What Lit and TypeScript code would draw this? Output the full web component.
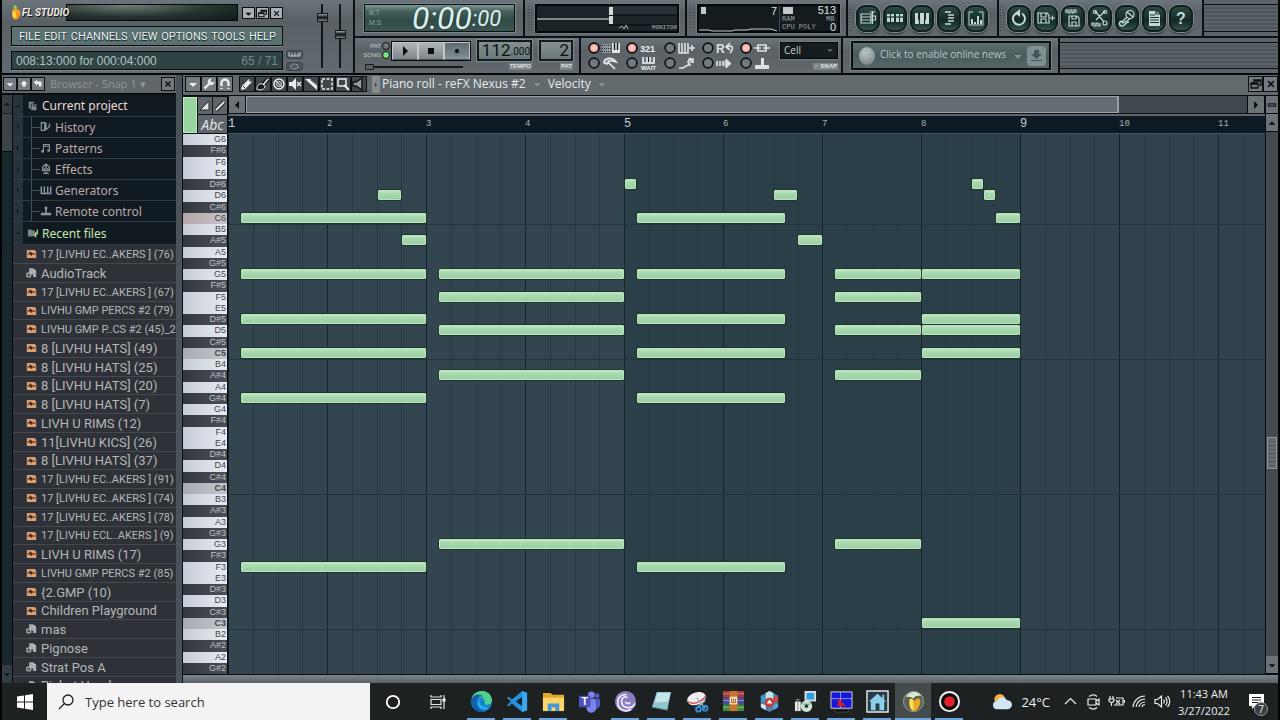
import { LitElement, html, svg, css, TemplateResult } from "lit";
import { customElement } from "lit/decorators.js";
import { classMap } from "lit/directives/class-map.js";

/* ---------- icons ---------- */

const light = "#c3d8d6";

const glyphs: Record<string, TemplateResult> = {
  down: svg`<path d="M3 6h8l-4 4z" fill="currentColor"/>`,
  up: svg`<path d="M3 9h8l-4-4z" fill="currentColor"/>`,
  left: svg`<path d="M9 3v8l-4-4z" fill="currentColor"/>`,
  right: svg`<path d="M5 3v8l4-4z" fill="currentColor"/>`,
  close: svg`<path d="M4 4l6 6M10 4l-6 6" stroke="currentColor" stroke-width="1.6" fill="none"/>`,
  restore: svg`<path d="M5 6V3h7v5h-2M2 6h7v5H2zM5 4h7M2 7h7" stroke="currentColor" stroke-width="1.3" fill="none"/>`,
  minus: svg`<path d="M2 5h10v4H2z" fill="#11171b"/><path d="M3 7h8" stroke="#7d878c"/>`,
  dot: svg`<path d="M7 3l4 4H9v3H5V7H3z" fill="currentColor"/>`,
  back: svg`<path d="M2 5l4-3v2h5v6H8V7H6v2z" fill="currentColor"/>`,
  wrench: svg`<path d="M2.5 11.5L8 6" stroke="currentColor" stroke-width="2.4" fill="none"/><path d="M12.5 4.5a3.4 3.4 0 1 1-3-3L8.5 4 10 5.5z" fill="currentColor"/>`,
  magnet: svg`<path d="M3.5 12V6a3.5 3.5 0 0 1 7 0v6" stroke="currentColor" stroke-width="2.4" fill="none"/><path d="M2 10h3M9 10h3" stroke="#20282c"/>`,
  pencil: svg`<path d="M1 13l1-4 7-7 3 3-7 7z" fill="currentColor"/><path d="M3 9l2 2M9 3l2 2" stroke="#20282c"/>`,
  brush: svg`<path d="M1 12c0-4 3-6 6-5l2 2c0 3-4 5-8 3z" fill="#11171a" stroke="currentColor"/><path d="M7 7l5-5" stroke="#11171a" stroke-width="4"/><path d="M7 8l5-6" stroke="currentColor" stroke-width="1.5"/>`,
  noentry: svg`<circle cx="7" cy="7" r="5" stroke="currentColor" stroke-width="1.5" fill="none"/><circle cx="7" cy="7" r="2.4" stroke="currentColor" fill="none"/><path d="M4 4l6 6" stroke="currentColor"/>`,
  mute: svg`<path d="M1 5h3l4-4v12L4 9H1z" fill="currentColor"/><path d="M9 5l4 4M13 5L9 9" stroke="currentColor" stroke-width="1.4"/>`,
  slice: svg`<path d="M1 2h5l7 5v6z" fill="currentColor"/><path d="M7 3l6 5" stroke="#20282c"/>`,
  marquee: svg`<rect x="2" y="2" width="10" height="10" stroke="currentColor" stroke-width="1.5" stroke-dasharray="3 1.5" fill="none"/>`,
  zoom: svg`<rect x="2" y="2" width="8" height="7" stroke="currentColor" stroke-width="1.5" fill="none"/><path d="M8 8l5 5" stroke="currentColor" stroke-width="2"/>`,
  speaker: svg`<path d="M1 5h3l6-4v12L4 9H1z" fill="#8f989c" stroke="#0d1214" stroke-width="1.4"/>`,
  ramp: svg`<path d="M2 11h9V2z" fill="currentColor" stroke="#20282c"/>`,
  line: svg`<path d="M3 11l8-8" stroke="#20282c" stroke-width="4"/><path d="M3 11l8-8" stroke="currentColor" stroke-width="2"/>`,
  play: svg`<path d="M5 2v10l5-5z" fill="#0a0e10"/>`,
  stop: svg`<path d="M4 4h6v6H4z" fill="#0a0e10"/>`,
  rec: svg`<circle cx="7" cy="7" r="5" fill="#6d7f84"/><circle cx="7" cy="7" r="2.2" fill="#11191c"/>`,
  files: svg`<path d="M2 2h6v3h3v7H5v-2H2z" fill="#7e858b"/><path d="M5 9V4.500h4M8 5v2h3" stroke="#262d33" fill="none"/>`,
  history: svg`<path d="M1.500 2h4v9h-4zM7 2v7M5 7l2 3 5-4M11 3v4" fill="none" stroke="currentColor" stroke-width="1.4"/>`,
  note: svg`<path d="M4 11V3h7v7M4 5h7" fill="none" stroke="currentColor" stroke-width="1.2"/><circle cx="3" cy="11" r="1.6" fill="currentColor"/><circle cx="10" cy="10" r="1.6" fill="currentColor"/>`,
  fx: svg`<path d="M7 1l4 4v4H9V6M7 2v10M7 1L3 5v4h2V6M4 12h6" fill="none" stroke="currentColor" stroke-width="1.5"/>`,
  keys: svg`<path d="M1.500 3v8h11V3M5 3v8M9 3v8" fill="none" stroke="currentColor" stroke-width="1.7"/>`,
  remote: svg`<path d="M1 9h12v3H1zM6 4h2v5H6z" fill="currentColor"/><circle cx="7" cy="3.500" r="1.7" fill="currentColor"/>`,
  folder: svg`<path d="M1 3h4l1 1h3v4H6l2 3H1z" fill="#79857f"/><path d="M12 3v5H9m-2 0l3 3V6" stroke="#b5d69a" stroke-width="1.5" fill="none"/>`,
  wave: svg`<path d="M1 2h10l2 2v8H1z" fill="#dc9f73"/><path d="M2 7h3V4l2 5V6l1 1h4" stroke="#34200f" stroke-width="1.3" fill="none"/>`,
  doc: svg`<path d="M4 1h5l4 3v8H9V9H4z" fill="#a9adb0"/><path d="M1 7h5v5H1zM9 4h3" stroke="#d5d8da" fill="#54585c"/>`,
};

const icon = (name: string, cls = "ic") =>
  html`<svg class=${cls} viewBox="0 0 14 14" aria-hidden="true">${glyphs[name]}</svg>`;

/* 18-unit artwork for the round toolbar buttons */
const pads: Record<string, TemplateResult> = {
  Playlist: svg`<path d="M2 5h10v9H2zM2 8h10M2 11h10M13.500 2v13M11 3h5M13.500 7h3v4h-3" />`,
  "Step sequencer": svg`<path d="M1 5h3v8H1zM5 5h3v8H5zM10 5h3v8h-3zM14 5h3v8h-3z" fill=${light} stroke="none"/><path d="M1 8h16" stroke="#17302e"/>`,
  "Piano roll": svg`<path d="M2 4h14v11H2z" fill=${light} stroke="none"/><path d="M6 4v7M12 4v7" stroke="#17302e" stroke-width="2"/><path d="M6.500 10v5M11.500 10v5" stroke="#17302e"/>`,
  Browser: svg`<path d="M5 3h6M8 6h6M8 9h6M8 12h6M5 15h6" stroke-width="1.7"/>`,
  Mixer: svg`<path d="M2 3v13h14V3M2 3h4M12 3h4" stroke-width="1"/><path d="M5 15v-5M8 15v-2M11 15V7M14 15v-4" stroke-width="2"/>`,
  Undo: svg`<path d="M7 4a6 6 0 1 0 5 .5" stroke-width="2"/><path d="M10 0v8L5 4z" fill=${light} stroke="none"/>`,
  "Save as": svg`<path d="M1 4h9l2 2v8H1zM4 4v4h5V4M4 14v-4h5v4M13 9h5M15.500 6.500v5"/>`,
  "Render wave": svg`<path d="M2 4V1h2v3h2V1h2v3h2V1h2v3M5 7h8l2 2v8H5zM8 7v3h4V7M8 17v-4h4v4"/>`,
  "Edit audio": svg`<path d="M4 2l9 11M14 2L5 11M1 17v-3h2v3h2v-3h2v3h2v-3" /><circle cx="14" cy="14" r="2"/><circle cx="4" cy="3" r="1.500"/><circle cx="14" cy="3" r="1.500"/>`,
  "Record audio": svg`<circle cx="12" cy="5.500" r="4"/><path d="M9 3l6 5M9 8l-5 5 1 1 7-4M5 12c-5 0-4 5-1 5s3-4 7-4" stroke-width="1.4"/>`,
  "Project info": svg`<path d="M4 2h7l4 3v12H4z" fill=${light} stroke="none"/><path d="M5 6h5M5 8.500h9M5 11h9M5 13.500h9M11 2v3h4" stroke="#17302e"/>`,
  Help: svg`<text x="9" y="15" text-anchor="middle" font-size="16" font-weight="bold" font-family="Liberation Sans, sans-serif" fill=${light} stroke="none">?</text>`,
};

/* 18x13 artwork beside the recording switches */
const marks: TemplateResult[] = [
  svg`<path d="M0 2h9v9H0z" fill="#8f989c"/><path d="M0 3.500h9M0 6.500h9M0 9.500h9" stroke="#262c2f" stroke-dasharray="1 1"/><path d="M10 1h8v10h-8z" fill="#dfe4e6"/><path d="M12.500 1v7M15.500 1v7" stroke="#15191b" stroke-width="1.4"/>`,
  svg`<text x="0" y="10" font-size="9" font-weight="bold" font-family="Liberation Sans, sans-serif" fill="#eef0f1">321</text>`,
  svg`<path d="M1 1v10h9V1M4 1v10M7 1v10M14 3v6M11 6h6" stroke="#dde2e4" stroke-width="1.6" fill="none"/>`,
  svg`<text x="0" y="11" font-size="12" font-weight="bold" font-family="Liberation Sans, sans-serif" fill="#dde2e4">R</text><path d="M11 5c6-3 7 2 3 6M14 1l-4 4 4 3" stroke="#dde2e4" stroke-width="1.6" fill="none"/>`,
  svg`<path d="M4 3h8v6H4zM0 6h7M9 6h7" stroke="#dde2e4" stroke-width="1.7" fill="none"/>`,
  svg`<path d="M2 6c0-5 8-7 12-1l-3-1-4 0-2 3zM6 5l7 7" stroke="#e4e8ea" stroke-width="1.7" fill="#8d969a"/>`,
  svg`<path d="M2 0h13v7H2z" fill="#cfd5d7"/><path d="M5 0v5M8.500 0v5M12 0v5" stroke="#15191b"/><text x="1" y="13" font-size="6" font-weight="bold" font-family="Liberation Sans, sans-serif" fill="#eef0f1">WAIT</text>`,
  svg`<path d="M1 11h4l5-3h2l-2-3 2-4M13 1v5M15 1v5" stroke="#dde2e4" stroke-width="1.7" fill="none"/>`,
  svg`<path d="M1 4v5M4 4v5M7 4v5" stroke="#dde2e4" stroke-width="1.7"/><path d="M9 4v5M10 2l5 4.500-5 4.500z" fill="#dde2e4" stroke="#dde2e4"/>`,
  svg`<path d="M1 8h14v4H1zM7 1h3v7H7z" fill="#dde2e4"/>`,
];

const switches: [string, boolean, number][] = [
  ["Typing keyboard to piano", true, 0], ["Countdown before recording", true, 1], ["Blend recording", false, 2],
  ["Loop recording", false, 3], ["Multilink controllers", true, 4], ["Auto-scroll", false, 5],
  ["Wait for input", false, 6], ["Step editing", false, 7], ["Song position follow", false, 8], ["Controller link", false, 9],
];

/* 24-unit taskbar artwork */
const apps: { name: string; open?: boolean; active?: boolean; art: TemplateResult }[] = [
  { name: "Microsoft Edge", open: true, art: svg`<circle cx="12" cy="12" r="11" fill="#1683d0"/><path d="M2 8C5-1 21-2 23 10c0 5-4 6-8 5 2-4-1-8-6-7-3 0-6 1-7 4z" fill="#4fd08c"/><path d="M1 12C2 4 10 3 14 7c-4-1-7 1-7 6 0 6 5 9 10 9C9 25 1 20 1 12z" fill="#1560ad"/><path d="M11 10c-3 4 1 9 9 8-5 5-12 1-12-4 0-2 1-4 3-4z" fill="#25b0e8"/>` },
  { name: "Visual Studio Code", open: true, art: svg`<path d="M17 1l5 2v18l-5 2L6 14l-3 3-2-1 4-4-4-4 2-1 3 3z" fill="#2492e0"/><path d="M17 7v10l-7-5z" fill="#1d2326"/><path d="M17 1l5 2v18l-5 2z" fill="#3aa8f5"/>` },
  { name: "File Explorer", open: true, art: svg`<path d="M1 3h8l2 2h12v16H1z" fill="#e3a52c"/><path d="M1 8h22v14H1z" fill="#fbd565"/><path d="M6 14h12v8h-4v-4h-4v4H6z" fill="#4596d4"/>` },
  { name: "Microsoft Teams", art: svg`<circle cx="14" cy="5" r="3.500" fill="#7b83eb"/><circle cx="20" cy="6" r="2.500" fill="#5059c9"/><path d="M9 9h10v8a5 5 0 0 1-10 3z" fill="#7b83eb"/><path d="M18 9h5v6c0 3-2 4-4 4z" fill="#5059c9"/><path d="M1 6h12v12H1z" fill="#4b53bc"/><text x="7" y="16" text-anchor="middle" font-size="11" font-weight="bold" font-family="Liberation Sans, sans-serif" fill="#fff">T</text>` },
  { name: "BitTorrent", open: true, art: svg`<circle cx="12" cy="12" r="11" fill="#8a7cc0"/><path d="M22 14c-3 6-13 6-14-1-1-4 3-7 6-5M18 20C12 24 3 20 4 12c0-5 5-8 9-7M17 13c-2 2-5 1-5-1" stroke="#eeeaf8" stroke-width="1.8" fill="none"/>` },
  { name: "Notepad", open: true, art: svg`<path d="M7 2h15l-4 19L2 18z" fill="#8fc7cf"/><path d="M8 3h13l-2 9-14 1z" fill="#c5e5e8"/><path d="M2 18l16 3 1-3" stroke="#5d6f73" fill="none"/>` },
  { name: "Snipping Tool", open: true, art: svg`<ellipse cx="11" cy="9" rx="10" ry="6.500" fill="#f0eef0" transform="rotate(-18 11 9)"/><path d="M2 12c5 4 14 1 19-6" stroke="#d3505f" stroke-width="1.5" fill="none"/><path d="M11 8l9 11M20 11l-9 8" stroke="#9db6c6" stroke-width="1.5"/><circle cx="13" cy="20" r="2.500" fill="none" stroke="#2f8fd8" stroke-width="2"/><circle cx="20" cy="19" r="2.500" fill="none" stroke="#2f8fd8" stroke-width="2"/>` },
  { name: "WinRAR", open: true, art: svg`<path d="M1 1h22v7H1z" fill="#a93a3e"/><path d="M1 8h22v7H1z" fill="#4a4c9c"/><path d="M1 15h22v7H1z" fill="#3f8a3c"/><path d="M1 4h22M1 11h22M1 18h22" stroke="#e6dcd8" stroke-opacity=".5"/><path d="M8 1h8v21H8z" fill="#c8762f"/><path d="M8 7h8v8H8z" fill="#f0e2b9"/><path d="M10 9v4h4V9M12 9v3" stroke="#b3541c" fill="none"/>` },
  { name: "3D Viewer", open: true, art: svg`<path d="M12 1l9 5v12l-9 5-9-5V6z" fill="#4f7fae"/><path d="M12 1l4 2v8H8V3z" fill="#bfe2ea"/><path d="M3 6l5 2v4l-5 1z" fill="#3a9ad6"/><path d="M3 14l5 2v5l-5-3z" fill="#dfe6ea"/><path d="M16 8l5-2v7l-5-1z" fill="#c9473c"/><path d="M16 15l5-1v4l-5 3z" fill="#48a8dd"/><circle cx="12" cy="13" r="5" fill="#c53b35"/><path d="M12 10l3 4H9z" fill="#fff"/>` },
  { name: "Setup", open: true, art: svg`<path d="M11 1h12v11H11z" fill="#d9dde0"/><path d="M13 3h8v7h-8z" fill="#2f9fe4"/><path d="M1 12h6v10H1z" fill="#ece7e0"/><path d="M2 10h4M4 10v12" stroke="#8d8d8d"/><circle cx="13" cy="17" r="6" fill="#cfe0d6"/><path d="M8 14l5 3 5-3" fill="#58b583"/><circle cx="13" cy="17" r="1.8" fill="#333"/>` },
  { name: "System Monitor", open: true, art: svg`<path d="M1 2h22v17H1z" fill="#1717dc" stroke="#d7d7d7"/><path d="M11 2v17M1 9h22" stroke="#8f96e8"/><path d="M8 8l9 9H8z" fill="#c3202f"/><path d="M5 20h14v3H5z" fill="#0b0b0b" stroke="#777" stroke-width=".5"/>` },
  { name: "Home", open: true, art: svg`<path d="M1 1h22v22H1z" fill="#2a3a44" stroke="#e3e8ea" stroke-width="1.5"/><path d="M12 4l9 8h-2v9H5v-9H3z" fill="#8bd0ea"/><path d="M10 14h4v7h-4z" fill="#2a3a44"/><path d="M17 5h2v5h-2z" fill="#8bd0ea"/>` },
  { name: "FL Studio", open: true, active: true, art: svg`<circle cx="12" cy="12" r="10.500" fill="#59635a" stroke="#99a596"/><path d="M4 7c3-6 13-7 16-1-4 0-7 0-8 3-2-2-5-2-8-2z" fill="#dcebd0"/><path d="M8 10c-1 6 1 12 4 12 5 0 8-8 7-12-2-2-5-1-6 2-1-3-3-4-5-2z" fill="#eba820"/><path d="M8 10c-1 6 1 11 4 11V13c-1-3-3-5-4-3z" fill="#ffe05a"/>` },
  { name: "Screen recorder", open: true, art: svg`<circle cx="12" cy="12" r="10" fill="#0d0d0d" stroke="#f3f3f3" stroke-width="2"/><circle cx="12" cy="12" r="5.500" fill="#e3232c"/>` },
];

/* ---------- data ---------- */

const NAMES = ["C", "C#", "D", "D#", "E", "F", "F#", "G", "G#", "A", "A#", "B"];
const TOP = 79;
const ROWS = 48;
const BAR = 99;
const keys = Array.from({ length: ROWS }, (_, i) => {
  const m = TOP - i;
  const n = NAMES[m % 12];
  /* octaves are numbered so that 60 is C5 */
  return { label: n + Math.floor(m / 12), black: n.length > 1, root: n === "C" };
});

type Note = [pitch: number, start: number, end: number];
const chord = (pitches: number[], start: number, end: number): Note[] =>
  pitches.map((p) => [p, start, end] as Note);

/* positions are counted in eighths of a bar */
const notes: Note[] = [
  ...chord([72, 67, 63, 60, 56, 41], 1, 16),
  ...chord([67, 65, 62, 58, 43], 17, 32),
  ...chord([72, 67, 63, 60, 56, 41], 33, 45),
  ...chord([67, 65, 62, 58, 43], 49, 56),
  ...chord([67, 63, 62, 60, 36], 56, 64),
  [74, 12, 14], [70, 14, 16], [75, 32, 33], [74, 44, 46], [70, 46, 48],
  [75, 60, 61], [74, 61, 62], [72, 62, 64],
];

const project: [string, string][] = [
  ["History", "history"], ["Patterns", "note"], ["Effects", "fx"],
  ["Generators", "keys"], ["Remote control", "remote"],
];

const recent: [string, boolean?][] = [
  ["17 [LIVHU EC..AKERS ] (76)"], ["AudioTrack", true], ["17 [LIVHU EC..AKERS ] (67)"],
  ["LIVHU GMP PERCS #2 (79)"], ["LIVHU GMP P..CS #2 (45)_2"], ["8 [LIVHU HATS] (49)"],
  ["8 [LIVHU HATS] (25)"], ["8 [LIVHU HATS] (20)"], ["8 [LIVHU HATS] (7)"],
  ["LIVH U RIMS (12)"], ["11[LIVHU KICS] (26)"], ["8 [LIVHU HATS] (37)"],
  ["17 [LIVHU EC..AKERS ] (91)"], ["17 [LIVHU EC..AKERS ] (74)"], ["17 [LIVHU EC..AKERS ] (78)"],
  ["17 [LIVHU ECL..AKERS ] (9)"], ["LIVH U RIMS (17)"], ["LIVHU GMP PERCS #2 (85)"],
  ["{2.GMP (10)"], ["Children Playground"], ["mas", true], ["Pignose", true],
  ["Strat Pos A", true], ["Rishat Hand", true],
];

const base = css`
  :host, * { box-sizing: border-box; }
  button, select, input { font: inherit; color: inherit; margin: 0; padding: 0; border: 0; background: none; border-radius: 0; }
  svg { display: block; }
  .ic { width: 14px; height: 14px; flex: none; }
`;

/* ---------- toolbar ---------- */

@customElement("fl-toolbar")
class FlToolbar extends LitElement {
  static styles = [base, css`
    :host { display: flex; flex: none; height: 75px; border-bottom: 2px solid #05090b; background: #5c646b; color: #dde3e5; font-family: "Liberation Sans", Arial, sans-serif; }
    .main { width: 353px; flex: none; display: flex; padding: 4px 0 0 9px; border-right: 2px solid #0b1013; background: linear-gradient(#6b747a, #596167 30%, #626a71); }
    .left { width: 272px; flex: none; display: flex; flex-direction: column; gap: 5px; }
    .title { display: flex; height: 17px; align-items: center; }
    .logo { z-index: 1; display: flex; align-items: center; width: 62px; flex: none; white-space: nowrap; color: #f0ece4; font: italic bold 10px "Roboto", sans-serif; text-shadow: 1px 1px 0 #111; }
    .logo svg { width: 11px; height: 17px; }
    .glass { width: 172px; height: 17px; border: 1px solid #060a0b; background: radial-gradient(ellipse at 35% 0, #71817c, #26332f 55%, #101a18); margin-left: -7px; }
    .win { display: flex; gap: 1px; margin-left: 4px; }
    .win button { width: 13px; height: 12px; display: grid; place-items: center; color: #0c1012; background: #aab0b3; border: 1px solid #0a0d0f; }
    .win .ic { width: 11px; height: 11px; }
    .menu { display: flex; justify-content: space-between; align-items: center; height: 20px; padding: 0 6px 0 7px; background: #5b7172; border: 1px solid #070b0c; box-shadow: 0 1px 0 #7f898d; color: #eaf3f1; font: 11px "Roboto", "Liberation Sans", sans-serif; }
    .menu button { text-shadow: 0 1px 1px #0d1a1b; }
    .hint { display: flex; justify-content: space-between; align-items: center; height: 19px; padding: 0 4px; background: #2f4244; border: 1px solid #070b0c; box-shadow: 0 1px 0 #7f898d; color: #b2c4c5; font-size: 12px; }
    .hint .count { color: #75878a; }
    .small { display: flex; flex-direction: column; justify-content: flex-end; gap: 3px; padding: 0 0 2px 3px; width: 31px; }
    .small button { width: 17px; height: 9px; border-radius: 3px; background: #4c555b; border: 1px solid #3a4248; display: grid; place-items: center; }
    .small svg { width: 13px; height: 7px; }
    .faders { display: flex; gap: 2px; }
    .faders input { appearance: none; writing-mode: vertical-lr; direction: rtl; width: 16px; height: 64px; background: linear-gradient(#10171a, #10171a) center / 2px 100% no-repeat; }
    .faders input::-webkit-slider-thumb { appearance: none; width: 11px; height: 9px; background: linear-gradient(#9aa3a8, #15191c 45%, #15191c 55%, #7f888d); border: 1px solid #171c1f; }
    .rest { flex: 1; min-width: 0; display: grid; grid-template-rows: 36px 37px; }
    .row { display: flex; min-width: 0; }
    .row + .row { border-top: 2px solid #0b1013; }
    .seg { flex: none; display: flex; align-items: center; border-right: 2px solid #0b1013; background: linear-gradient(#6b747a, #5a6268 35%, #61696f); }
    .grip::before { content: ""; width: 5px; height: 26px; margin-right: 3px; background: radial-gradient(#3d454a 1px, transparent 1px) 0 0 / 3px 3px; }
    .fill { flex: 1; border: solid #0b1013; border-width: 1px 0; margin: 4px 0; background: repeating-linear-gradient(#596268 0 2px, #4f575d 2px 4px); }
    .time { width: 170px; padding: 0 7px 0 8px; }
    .lcd { flex: 1; height: 30px; display: flex; align-items: center; border: 2px solid #0a1011; outline: 1px solid #78838a; outline-offset: -1px; background: linear-gradient(#7d9792, #45605c 25%, #304a47 60%, #3c5652); }
    .lcd .modes { width: 47px; padding-left: 4px; color: #8ea7a3; font-size: 7px; line-height: 10px; }
    .big { color: #ddf0ed; font: italic 32px/26px "Roboto", sans-serif; text-shadow: 0 0 2px #203331; }
    .mid { color: #ddf0ed; font: italic 22px/25px "Roboto", sans-serif; align-self: flex-end; }
    .monitor { width: 162px; padding: 0 6px 0 2px; }
    .scope { position: relative; flex: 1; height: 29px; border: 2px solid #05080a; background: #1b2429; outline: 1px solid #6e777c; }
    .scope svg { width: 100%; height: 25px; }
    .scope span { position: absolute; right: 0; bottom: 0; color: #a9b0b3; font: 6px/6px "Liberation Mono", monospace; }
    .perf { width: 161px; padding: 0 6px 0 2px; }
    .perfbox { flex: 1; height: 29px; display: grid; grid-template-columns: 81px 1fr; border: 2px solid #05080a; background: #141b1f; outline: 1px solid #6e777c; font: 7px/8px "Liberation Mono", monospace; color: #9aa4a8; }
    .cpu { position: relative; display: flex; justify-content: space-between; align-items: flex-start; padding: 1px 2px; border-right: 1px solid #3d474c; }
    .cpu svg { position: absolute; left: 0; bottom: 0; width: 78px; height: 5px; }
    .chip { width: 5px; height: 7px; background: #c3c9ca; }
    .num { font: 11px/9px "Liberation Sans", sans-serif; color: #dce1e2; text-align: right; }
    .mem { display: grid; grid-template-columns: 1fr auto; padding: 0 2px; align-items: center; }
    .mem .chip { width: 10px; margin-left: 1px; }
    .tools { gap: 3px; }
    .tools.grip::before { margin-right: 0; }
    .tools.a { width: 151px; }
    .tools.b { width: 205px; }
    .pad { width: 24px; height: 27px; border-radius: 9px; display: grid; place-items: center; background: linear-gradient(#2d4846, #132926 60%, #34504d); border: 2px solid #101e1e; box-shadow: 0 0 0 1px #7b898b, 0 2px 2px #2a3135; }
    .pad svg { width: 18px; height: 18px; fill: none; stroke: #c3d8d6; stroke-width: 1.2; }
    .transport { width: 226px; padding: 0 7px 0 8px; align-items: flex-start; gap: 7px; }
    .song { width: 107px; flex: none; }
    .songtop { display: flex; height: 24px; align-items: center; padding-top: 1px; }
    .ps { width: 28px; display: grid; grid-template-columns: 18px 9px; row-gap: 1px; align-items: center; font: 6px/8px "Liberation Sans", sans-serif; color: #c8cfd2; text-align: right; column-gap: 1px; }
    .ps input { appearance: none; width: 8px; height: 8px; border-radius: 50%; border: 1px solid #0d1113; background: #6f777c; }
    .ps input:checked { background: #7be687; }
    .keys3 { display: flex; border: 1px solid #0a0d0f; }
    .keys3 button { width: 26px; height: 18px; display: grid; place-items: center; background: linear-gradient(#b0b6b9, #7d858a); border: 1px solid #c0c6c9; border-bottom-color: #4c5358; }
    .keys3 button:last-child { background: linear-gradient(#5c696e, #84949a); }
    .songpos { display: block; appearance: none; width: 98px; height: 8px; margin: 1px 0 0 2px; background: linear-gradient(#12181b, #12181b) center / 100% 2px no-repeat; }
    .songpos::-webkit-slider-thumb { appearance: none; width: 9px; height: 6px; background: #565e63; border: 1px solid #1b2124; }
    .counter { padding-top: 2px; display: flex; flex-direction: column; align-items: flex-end; }
    .digits { height: 21px; display: flex; align-items: flex-end; justify-content: flex-end; border: 2px solid #12191b; background: linear-gradient(#82908f, #6b7877); color: #0b1213; outline: 1px solid #7c868b; }
    .tempo { width: 55px; }
    .pat { width: 34px; padding-right: 2px; }
    .seven { font: 17px/18px "Roboto", sans-serif; }
    .three { font: 10px/14px "Roboto", sans-serif; }
    .tag { margin-top: 2px; padding: 0 1px; font: bold 6px/7px "Liberation Sans", sans-serif; color: #dde2e4; background: #7a8388; }
    .rec { width: 262px; padding: 0 5px 0 7px; gap: 2px; }
    .grid { display: grid; grid-template-columns: repeat(5, 38px); row-gap: 2px; }
    .sw { display: flex; align-items: center; gap: 2px; height: 13px; }
    .sw input { appearance: none; width: 12px; height: 12px; border-radius: 50%; border: 2px solid #15191b; background: #717a7f; box-shadow: 0 0 1px #aab1b5; }
    .sw input:checked { background: radial-gradient(#ffe1d8, #ef7f77); }
    .sw svg { width: 18px; height: 13px; }
    .snap { display: flex; flex-direction: column; align-items: flex-end; gap: 2px; }
    .snapsel { display: flex; align-items: center; width: 58px; height: 17px; background: #141c20; border: 1px solid #050809; box-shadow: 0 0 0 1px #6f797f; color: #c7cfd2; font: 10px "Open Sans", sans-serif; }
    .snapsel select { appearance: none; width: 44px; padding-left: 3px; }
    .snapsel .ic { width: 10px; color: #5f6a70; }
    .news { width: 217px; padding: 0 7px 0 8px; }
    .newsbtn { flex: 1; min-width: 0; height: 29px; display: flex; align-items: center; border: 2px solid #0a1012; background: linear-gradient(#5e6f71, #4a5b5d 50%, #566769); outline: 1px solid #78828a; color: #b9c6c7; font: 10px "Open Sans", "Noto Sans", sans-serif; padding: 0 3px; }
    .ball { width: 16px; height: 18px; border-radius: 50%; margin: 0 5px 0 3px; background: radial-gradient(circle at 40% 30%, #bcc5c6, #6d797b); flex: none; }
    .newsbtn .lab { flex: 1; text-align: left; padding-bottom: 4px; white-space: nowrap; }
    .newsbtn .ic { color: #84928f; }
    .dl { width: 19px; height: 20px; flex: none; border-radius: 4px; background: #7f8e90; display: grid; place-items: center; margin-left: 2px; }
    .dl svg { width: 15px; height: 15px; }
  `];

  pad(name: string) {
    return html`<button class="pad" aria-label=${name}><svg viewBox="0 0 18 18">${pads[name]}</svg></button>`;
  }

  render() {
    return html`
      <div class="main">
        <div class="left">
          <div class="title">
            <span class="logo"><svg viewBox="0 0 12 17"><path d="M1 8c0-4 3-4 6-3 4 1 4 5 2 8-2 4-5 4-7 1z" fill="#f59a1c"/><path d="M3 7c3-1 3 5 1 8-3-1-3-6-1-8z" fill="#ffd84e"/><path d="M3 1c3-1 4 1 3 4-3 0-4-2-3-4z" fill="#9bd04a"/></svg>FL STUDIO</span>
            <span class="glass"></span>
            <span class="win">
              <button aria-label="Minimize">${icon("down")}</button><button aria-label="Restore">${icon("restore")}</button><button aria-label="Close">${icon("close")}</button>
            </span>
          </div>
          <nav class="menu">${["FILE", "EDIT", "CHANNELS", "VIEW", "OPTIONS", "TOOLS", "HELP"].map((m) => html`<button>${m}</button>`)}</nav>
          <div class="hint"><span>008:13:000 for 000:04:000</span><span class="count">65 / 71</span></div>
        </div>
        <div class="small">
          <button aria-label="MIDI activity"><svg viewBox="0 0 13 7"><path d="M1 1v4h11V1M4 2v3M7 2v3M10 2v3" stroke="#c4cbce" fill="none"/></svg></button>
          <button aria-label="Output"><svg viewBox="0 0 13 7"><path d="M3 3.500a3.500 2.500 0 0 1 7 0a3.500 2.500 0 0 1-7 0" stroke="#c4cbce" fill="none" stroke-dasharray="2 1"/></svg></button>
        </div>
        <div class="faders">
          <input type="range" aria-label="Master volume" value="83" />
          <input type="range" aria-label="Master pitch" value="53" />
        </div>
      </div>
      <div class="rest">
        <div class="row">
          <div class="seg time"><div class="lcd"><span class="modes">B:T<br />M:S</span><span class="big">0:00</span><span class="mid">:00</span></div></div>
          <div class="seg grip monitor"><div class="scope">
            <svg viewBox="0 0 140 25" preserveAspectRatio="none"><path d="M72 0h68v9H72z" fill="#273137"/><path d="M0 13h72" stroke="#e4e9ea"/><path d="M72 9h68M72 19h68" stroke="#05080a"/><path d="M72 1h4v8h-4zM72 10h4v8h-4z" fill="#d5d9da"/><path d="M82 22l3-2 2 3 2-4 2 4" stroke="#aeb5b8" fill="none"/></svg><span>MONITOR</span>
          </div></div>
          <div class="seg grip perf"><div class="perfbox">
            <div class="cpu"><span class="chip"></span><span class="num">7</span><svg viewBox="0 0 78 5"><path d="M0 3h10l3 1h20l3-1h12l4-1h20l6 2" stroke="#c3c9cb" fill="none"/></svg></div>
            <div class="mem"><span class="chip"></span><span class="num">513</span><span>RAM</span><span>&nbsp;&nbsp;MB</span><span>CPU POLY</span><span class="num">0</span></div>
          </div></div>
          <div class="seg grip tools a">${["Playlist", "Step sequencer", "Piano roll", "Browser", "Mixer"].map((n) => this.pad(n))}</div>
          <div class="seg grip tools b">${["Undo", "Save as", "Render wave", "Edit audio", "Record audio", "Project info", "Help"].map((n) => this.pad(n))}</div>
          <div class="fill"></div>
        </div>
        <div class="row">
          <div class="seg transport">
            <div class="song">
              <div class="songtop">
                <div class="ps"><label for="pat">PAT</label><input id="pat" type="radio" name="mode" /><label for="song">SONG</label><input id="song" type="radio" name="mode" checked /></div>
                <div class="keys3"><button aria-label="Play">${icon("play")}</button><button aria-label="Stop">${icon("stop")}</button><button aria-label="Record">${icon("rec")}</button></div>
              </div>
              <input class="songpos" type="range" aria-label="Song position" value="0" />
            </div>
            <div class="counter"><div class="digits tempo"><span class="seven">112</span><span class="three">.000</span></div><span class="tag">TEMPO</span></div>
            <div class="counter"><div class="digits pat"><span class="seven">2</span></div><span class="tag">PAT</span></div>
          </div>
          <div class="seg rec">
            <div class="grid">${switches.map(([n, on, m]) => html`<label class="sw"><input type="checkbox" aria-label=${n} ?checked=${on} /><svg viewBox="0 0 18 13">${marks[m]}</svg></label>`)}</div>
            <div class="snap"><span class="snapsel"><select aria-label="Snap"><option>Cell</option></select>${icon("down")}</span><span class="tag">∩ SNAP</span></div>
          </div>
          <div class="seg news"><button class="newsbtn"><span class="ball"></span><span class="lab">Click to enable online news</span>${icon("down")}<span class="dl"><svg viewBox="0 0 15 15"><path d="M5 2h5v4h3l-5.500 5L2 6h3zM2 12h11v1H2z" fill="#46565a"/></svg></span></button></div>
          <div class="fill"></div>
        </div>
      </div>`;
  }
}

/* ---------- browser ---------- */

@customElement("fl-browser")
class FlBrowser extends LitElement {
  static styles = [base, css`
    :host { display: flex; flex-direction: column; width: 174px; flex: none; min-height: 0; overflow: hidden; background: #1a262c; font-family: "Roboto", "Liberation Sans", sans-serif; }
    .bar { display: flex; align-items: flex-start; height: 20px; flex: none; padding: 2px 1px 0; background: #5f676c; border-bottom: 2px solid #080d10; }
    .bar button { width: 14px; height: 14px; display: grid; place-items: center; border: 1px solid #0c1114; background: #737b80; color: #eef1f2; }
    .bar button .ic { width: 12px; height: 12px; }
    .bar .x { color: #0c1114; }
    .bar .name { flex: 1; padding-left: 5px; color: #8f979b; font: 11px/14px "Open Sans", sans-serif; white-space: nowrap; overflow: hidden; }
    .body { flex: 1; min-height: 0; display: flex; }
    .scroll { width: 11px; flex: none; display: flex; flex-direction: column; background: #18272c; border-right: 1px solid #060a0c; color: #0d1416; }
    .scroll button { height: 18px; background: #333d42; display: grid; place-items: center; }
    .scroll .ic { width: 10px; height: 10px; }
    .thumb { height: 38px; margin-top: 1px; background: #3a4449; border-bottom: 1px solid #070b0d; }
    .scroll button:last-child { margin-top: auto; }
    .tree { flex: 1; min-width: 0; overflow: hidden; }
    .item { display: flex; align-items: center; width: 100%; height: 21px; background: #111a21; border-bottom: 1px solid #303a42; font-size: 14px; white-space: nowrap; color: #bba9a6; text-align: left; }
    .item .ic { width: 12px; height: 12px; color: #8f979c; }
    .arrow { width: 10px; height: 100%; flex: none; display: grid; place-items: center; background: #29343a; margin-right: 4px; }
    .item .arrow .ic { width: 8px; height: 8px; color: #121a1e; }
    .item .txt { padding-left: 3px; font: 12px "Noto Sans", sans-serif; }
    .item.cur { height: 22px; color: #ead9d4; }
    .branch { width: 9px; height: 100%; margin-left: 4px; border-left: 1px solid #465058; background: linear-gradient(#465058, #465058) center / 100% 1px no-repeat; }
    .item.rec { height: 23px; color: #c8e6ae; }
    .file { display: flex; align-items: center; width: 100%; height: 19px; padding-left: 13px; background: #2e3238; border-bottom: 1px solid #44494f; color: #b4b7b9; font-size: 13px; white-space: nowrap; text-align: left; }
    .file:nth-of-type(4n) { height: 18px; }
    .file .ic { width: 11px; height: 12px; }
    .file .txt { padding-left: 4px; }
    .file.tight { font-size: 11px; }
  `];

  render() {
    return html`
      <div class="bar">
        <button aria-label="Options">${icon("down")}</button><button aria-label="Up">${icon("dot")}</button><button aria-label="Back">${icon("back")}</button>
        <span class="name">Browser - Snap 1 ▾</span>
        <button class="x" aria-label="Close">${icon("close")}</button>
      </div>
      <div class="body">
        <div class="scroll"><button aria-label="Scroll up">${icon("up")}</button><div class="thumb"></div><button aria-label="Scroll down">${icon("down")}</button></div>
        <div class="tree">
          <div><button class="item cur"><span class="arrow">${icon("down")}</span>${icon("files")}<span class="txt">Current project</span></button>
          ${project.map(([t, i]) => html`<button class="item"><span class="arrow">${icon("right")}</span><span class="branch"></span>${icon(i)}<span class="txt">${t}</span></button>`)}
          <button class="item rec"><span class="arrow">${icon("down")}</span>${icon("folder")}<span class="txt">Recent files</span></button></div>
          <div>${recent.map(([t, d]) => html`<button class=${classMap({ file: true, tight: t.length > 22 })}>${icon(d ? "doc" : "wave")}<span class="txt">${t}</span></button>`)}</div>
        </div>
      </div>`;
  }
}

/* ---------- piano roll ---------- */

@customElement("fl-piano-roll")
class FlPianoRoll extends LitElement {
  static styles = [base, css`
    :host { flex: 1; min-width: 0; display: flex; flex-direction: column; background: #5f676c; border-left: 1px solid #0a0f12; font-family: "Liberation Sans", Arial, sans-serif; }
    .bar { display: flex; align-items: flex-start; height: 21px; flex: none; padding: 1px 0 0 2px; background: #626a6e; border-bottom: 1px solid #080d10; color: #e5eaec; }
    .bar button { width: 16px; height: 16px; display: grid; place-items: center; border: 1px solid #0c1114; background: #737b80; color: #e9edef; }
    .bar .dark { background: #3f474c; }
    .gap { margin-left: 6px; }
    .bar .name { display: flex; align-items: center; flex: 1; padding-left: 2px; font: 12px/16px "Open Sans", "Noto Sans", sans-serif; white-space: nowrap; }
    .bar .name .ic { width: 12px; height: 12px; color: #8c9599; margin: 0 5px; }
    .bar .win { color: #0c1114; width: 15px; }
    .handle { width: 8px; height: 17px; background: #858d91; color: #3b4348; margin-left: 5px; display: grid; place-items: center; }
    .handle .ic { width: 8px; height: 8px; }
    .mid { flex: 1; min-height: 0; display: flex; }
    .keyscol { width: 45px; flex: none; display: flex; flex-direction: column; border-right: 1px solid #060b0e; }
    .corner { height: 38px; flex: none; display: grid; grid-template-columns: 14px 14px 14px; grid-template-rows: 17px 18px; gap: 1px; padding-top: 1px; background: #0a1013; }
    .velocity { grid-row: span 2; background: #98d3a0; border: 1px solid #c3ecc6; }
    .corner button { display: grid; place-items: center; background: #5e666b; color: #e3e7e9; }
    .corner .abc { grid-column: span 2; font: italic 14px "Open Sans", sans-serif; }
    .keys { flex: 1; display: grid; grid-template-rows: repeat(48, 1fr); background: #0c1114; }
    .key { min-height: 0; display: flex; align-items: center; justify-content: flex-end; padding-right: 1px; overflow: hidden; font-size: 9px; line-height: 9px; background: linear-gradient(90deg, #c6ccd6, #e8ebf3); color: #43474e; }
    .key.black { background: linear-gradient(90deg, #33373e, #4b4f57); color: #c0c4ca; }
    .key.root { background: linear-gradient(90deg, #a9abb2, #c3c6cb); font-weight: bold; }
    .key.hot { background: linear-gradient(90deg, #b3a7aa, #c8c3c7); font-weight: normal; }
    .main { flex: 1; min-width: 0; display: flex; flex-direction: column; }
    .hscroll { display: flex; height: 18px; flex: none; margin-bottom: 2px; background: #3f484e; border-bottom: 1px solid #0a1013; }
    .hscroll button { width: 18px; display: grid; place-items: center; background: #6b7378; border-right: 1px solid #080d10; border-left: 1px solid #080d10; color: #0b1012; }
    .hscroll .thumb { flex: 872; background: #656d74; border: 1px solid #99a1a6; border-right-width: 2px; }
    .hscroll .space { flex: 128; }
    .ruler { position: relative; height: 18px; flex: none; overflow: hidden; background: #0e1a23; border-bottom: 1px solid #44545d; color: #a3b0b6; font: 9px/17px "Liberation Mono", monospace; }
    .ruler span { position: absolute; top: 0; }
    .ruler .strong { font-size: 12px; color: #c3ccd0; }
    .roll { position: relative; flex: 1; overflow: hidden; background: linear-gradient(90deg, #33454e 0 396px, #2b3f48 396px 792px, #30434c 792px); }
    .v { position: absolute; top: 0; bottom: 0; width: 1px; background: #273942; }
    .v.bar1 { width: 1px; background: #15252e; }
    .h { position: absolute; left: 0; right: 0; height: 1px; background: #22333b; }
    .note { position: absolute; height: 10px; border-radius: 2px; background: linear-gradient(#c4ebc5, #a9d9b0 35%, #9bcda4); box-shadow: 0 0 0 1px #20352f, inset 0 0 0 1px #b9e6bd; }
    .vscroll { width: 13px; flex: none; display: flex; flex-direction: column; border-left: 1px solid #070b0e; background: #434b51; color: #0b1012; }
    .vscroll button { height: 18px; flex: none; display: grid; place-items: center; background: #6b7378; border-bottom: 1px solid #080d10; }
    .vscroll .track { flex: 1; display: flex; flex-direction: column; }
    .vscroll .track::before { content: ""; flex: 62; }
    .vscroll .track::after { content: ""; flex: 38; }
    .vscroll .thumb { height: 32px; flex: none; margin: 0 1px; border: 1px solid #8d959a; background: repeating-linear-gradient(#646c71 0 3px, #51595e 3px 4px); }
    .vscroll .ic { width: 12px; height: 12px; }
    .foot { height: 9px; flex: none; background: linear-gradient(#7c8589, #5a6267); border-top: 1px solid #080d10; }
  `];

  render() {
    const total = 11;
    const x = (eighths: number) => Math.round((eighths * BAR) / 8) + 1;
    return html`
      <div class="bar">
        <button aria-label="Options">${icon("down")}</button><button aria-label="Tools">${icon("wrench")}</button><button aria-label="Snap">${icon("magnet")}</button>
        <button class="gap dark" aria-label="Draw">${icon("pencil")}</button>
        ${["brush", "noentry", "mute", "slice", "marquee", "zoom", "speaker"].map((n) => html`<button class="dark" aria-label=${n}>${icon(n)}</button>`)}
        <span class="handle">${icon("right")}</span>
        <span class="name">Piano roll - reFX Nexus #2 ${icon("down")} Velocity ${icon("down")}</span>
        <button class="win" aria-label="Restore">${icon("restore")}</button><button class="win" aria-label="Close">${icon("close")}</button>
      </div>
      <div class="mid">
        <div class="keyscol">
          <div class="corner"><span class="velocity"></span><button aria-label="Ramp">${icon("ramp")}</button><button aria-label="Line">${icon("line")}</button><button class="abc">Abc</button></div>
          <div class="keys">${keys.map((k) => html`<span class=${classMap({ key: true, black: k.black, root: k.root, hot: k.label === "C6" })}>${k.label}</span>`)}</div>
        </div>
        <div class="main">
          <div class="hscroll"><button aria-label="Scroll left">${icon("left")}</button><div class="thumb"></div><div class="space"></div><button aria-label="Scroll right">${icon("right")}</button></div>
          <div class="ruler">${Array.from({ length: total }, (_, i) => html`<span class=${classMap({ strong: i % 4 === 0 })} style="left:${i * BAR}px">${i + 1}</span>`)}</div>
          <div class="roll">
            ${Array.from({ length: total * 4 }, (_, i) => html`<span class=${classMap({ v: true, bar1: i % 4 === 0 })} style="left:${Math.round((i * BAR) / 4)}px"></span>`)}
            ${[72, 60, 48, 36].map((m) => html`<span class="h" style="top:${((TOP - m + 1) / ROWS) * 100}%"></span>`)}
            ${notes.map(([p, s, e]) => html`<span class="note" style="left:${x(s)}px;width:${x(e) - x(s) - 1}px;top:${((TOP - p) / ROWS) * 100}%"></span>`)}
          </div>
        </div>
        <div class="vscroll"><button aria-label="Zoom">${icon("minus")}</button><button aria-label="Scroll up">${icon("up")}</button><div class="track"><div class="thumb"></div></div><button aria-label="Scroll down">${icon("down")}</button></div>
      </div>
      <div class="foot"></div>`;
  }
}

/* ---------- taskbar ---------- */

@customElement("win-taskbar")
class WinTaskbar extends LitElement {
  static styles = [base, css`
    :host { display: flex; height: 37px; flex: none; background: #1d2122; color: #eceeee; font: 12px "Open Sans", "Noto Sans", sans-serif; }
    button { flex: none; }
    .start { width: 45px; display: grid; place-items: center; }
    .start svg { width: 16px; height: 16px; }
    .search { width: 323px; display: flex; align-items: center; background: #f3f3f3; padding-left: 11px; gap: 11px; color: #2b2b2b; }
    .search svg { width: 16px; height: 16px; flex: none; }
    .search input { flex: 1; min-width: 0; font-size: 13px; outline: none; }
    .search input::placeholder { color: #333; opacity: 1; }
    .sys { width: 45px; display: grid; place-items: center; }
    .sys svg { width: 18px; height: 18px; }
    .apps { display: flex; padding-left: 3px; }
    .app { width: 36px; display: grid; place-items: center; background: linear-gradient(#6da5dc, #6da5dc) bottom center / 0 2px no-repeat; }
    .app.open { background-size: 28px 2px; }
    .app.active { background-color: #454a4b; background-size: 36px 2px; }
    .app svg { width: 23px; height: 23px; }
    .tray { margin-left: auto; display: flex; align-items: center; }
    .weather { display: flex; align-items: center; gap: 8px; font-size: 13px; padding-right: 9px; }
    .weather svg { width: 21px; height: 18px; }
    .t { width: 23px; display: grid; place-items: center; }
    .t svg { width: 17px; height: 17px; fill: none; stroke: #eceeee; stroke-width: 1.2; }
    .clock { width: 60px; text-align: center; line-height: 17px; font-size: 11px; white-space: nowrap; }
    .bell { width: 44px; position: relative; display: grid; place-items: center; height: 37px; }
    .bell svg { width: 17px; height: 17px; }
    .badge { position: absolute; right: 10px; bottom: 4px; width: 14px; height: 14px; border-radius: 50%; background: #3b3f41; border: 1px solid #92979a; font: 10px/12px "Open Sans", sans-serif; }
  `];

  render() {
    return html`
      <button class="start" aria-label="Start"><svg viewBox="0 0 16 16"><path d="M0 2.500L7 1.500v6H0zM8 1.300L16 0v7.500H8zM0 8.500h7v6l-7-1zM8 8.500h8V16l-8-1.300z" fill="#fff"/></svg></button>
      <label class="search"><svg viewBox="0 0 16 16"><circle cx="10" cy="6" r="5" fill="none" stroke="#222" stroke-width="1.3"/><path d="M6.500 9.500L1 15" stroke="#222" stroke-width="1.3"/></svg><input type="text" aria-label="Search" placeholder="Type here to search" /></label>
      <button class="sys" aria-label="Cortana"><svg viewBox="0 0 18 18"><circle cx="9" cy="9" r="6.200" fill="none" stroke="#fff" stroke-width="1.8"/></svg></button>
      <button class="sys" aria-label="Task view"><svg viewBox="0 0 18 18"><path d="M2 2v2h10V2M2 16v-2h10v2M2 6.500h10v5H2zM15 2v14" fill="none" stroke="#e4e6e6" stroke-width="1.2"/><path d="M13.500 5.500h3v3h-3z" fill="#fff"/></svg></button>
      <div class="apps">${apps.map((a) => html`<button class=${classMap({ app: true, open: !!a.open, active: !!a.active })} aria-label=${a.name}><svg viewBox="0 0 24 24">${a.art}</svg></button>`)}</div>
      <div class="tray">
        <button class="weather"><svg viewBox="0 0 22 20"><circle cx="8" cy="7" r="6" fill="#f6b13c"/><path d="M5 18a4.500 4.500 0 0 1 0-9 6 6 0 0 1 11-1 5 5 0 0 1 1 10z" fill="#cfe6f6"/></svg>24°C</button>
        <button class="t" aria-label="Hidden icons"><svg viewBox="0 0 17 17"><path d="M3 11l5.500-5.500L14 11"/></svg></button>
        <button class="t" aria-label="Meet now"><svg viewBox="0 0 17 17"><path d="M3 6h8v6H3zM11 8l3-2v6l-3-2M4 3.500c3-2 6-2 8 0M4 14.500c3 2 6 2 8 0"/></svg></button>
        <button class="t" aria-label="Battery"><svg viewBox="0 0 17 17"><path d="M2 3v3M5 3v3M1 6h5v2L3.500 10 1 8zM3.500 10v3M8 5h7v7H6M16.500 7v3M8 7l4 4M12 7l-4 4"/></svg></button>
        <button class="t" aria-label="Network"><svg viewBox="0 0 17 17"><path d="M2 14A12 12 0 0 1 14 3M5 14A9 9 0 0 1 14 6M8 14a6 6 0 0 1 6-5M11 14a3 3 0 0 1 3-2.500"/></svg></button>
        <button class="t" aria-label="Volume"><svg viewBox="0 0 17 17"><path d="M1 6.500h2.500l4-3.500v11l-4-3.500H1zM9.500 6.500c1 1 1 3 0 4M11.500 4.500c2 2 2 6 0 8M13.500 3c3 3 3 8 0 11"/></svg></button>
        <button class="clock">11:43 AM<br />3/27/2022</button>
        <button class="bell" aria-label="Notifications, 7 new"><svg viewBox="0 0 17 17"><path d="M1 1h15v12H7l-3 3v-3H1z" fill="#fff"/><path d="M4 4.500h9M4 7h9M4 9.500h6" stroke="#222"/></svg><span class="badge">7</span></button>
      </div>`;
  }
}

@customElement("app-root")
class AppRoot extends LitElement {
  static styles = css`
    :host { display: flex; flex-direction: column; height: 100vh; box-sizing: border-box; padding: 0 2px; background: #020303; overflow: hidden; }
    .work { flex: 1; min-height: 0; display: flex; gap: 6px; background: #4a5359; }
  `;

  render() {
    return html`<fl-toolbar></fl-toolbar>
      <div class="work"><fl-browser></fl-browser><fl-piano-roll></fl-piano-roll></div>
      <win-taskbar></win-taskbar>`;
  }
}
